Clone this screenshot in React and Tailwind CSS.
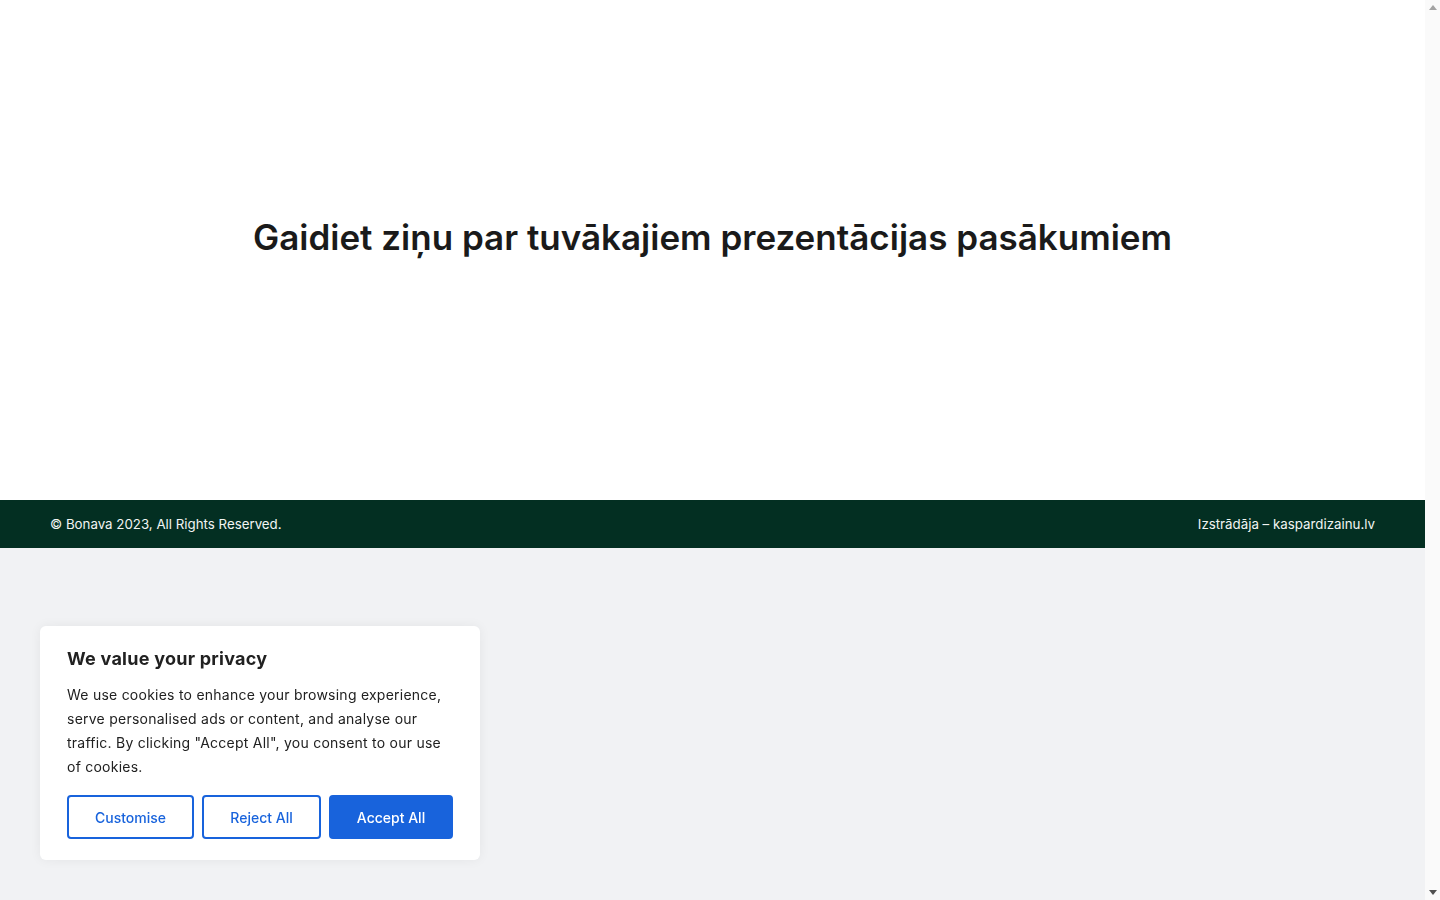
import React from "react";

function CookieBanner() {
  return (
    <div className="fixed left-10 bottom-10 w-[440px] rounded-md bg-white px-[27px] pt-[21px] pb-[21px] shadow-[0_0_12px_rgba(0,0,0,0.06)]">
      <p className="text-[18px] leading-[24px] font-bold tracking-[0.25px] text-[#212121]">We value your privacy</p>
      <p className="mt-[12px] text-[14px] leading-[24px] tracking-[0.24px] text-[#212121]">
        We use cookies to enhance your browsing experience, serve personalised ads or content, and analyse our traffic. By clicking "Accept All", you consent to our use of cookies.
      </p>
      <div className="mt-[16px] flex gap-2">
        <button className="h-[44px] w-[127px] rounded-sm border-2 border-[#1863dc] text-[14px] font-medium text-[#1863dc]">Customise</button>
        <button className="h-[44px] w-[119px] rounded-sm border-2 border-[#1863dc] text-[14px] font-medium text-[#1863dc]">Reject All</button>
        <button className="h-[44px] w-[124px] rounded-sm border-2 border-[#1863dc] bg-[#1863dc] text-[14px] font-medium text-white">Accept All</button>
      </div>
    </div>
  );
}

// browser scrollbar strip on the right
function ScrollStrip() {
  return (
    <div className="flex w-[15px] flex-col items-center justify-between bg-[#fafafa] py-[5px]">
      <svg width="8" height="5" viewBox="0 0 8 5"><path d="M0 5 L4 0 L8 5 Z" fill="#a3a3a3" /></svg>
      <svg width="8" height="5" viewBox="0 0 8 5"><path d="M0 0 L8 0 L4 5 Z" fill="#505050" /></svg>
    </div>
  );
}

export default function App() {
  return (
    <div className="flex h-screen font-['Inter',sans-serif]">
      <div className="flex-1 overflow-hidden bg-[#f1f2f4]">
        <section className="h-[500px] bg-white pt-[217px]">
          <h1 className="text-center text-[35px] leading-[40px] font-semibold text-[#1a1a1a]">
            Gaidiet ziņu par tuvākajiem prezentācijas pasākumiem
          </h1>
        </section>
        <footer className="flex h-[48px] items-center justify-between bg-[#032f22] px-[50px] pt-[1px] text-[13.3px] text-[#f2f5f3]">
          <span>© Bonava 2023, All Rights Reserved.</span>
          <span>Izstrādāja – kaspardizainu.lv</span>
        </footer>
      </div>
      <ScrollStrip />
      <CookieBanner />
    </div>
  );
}
